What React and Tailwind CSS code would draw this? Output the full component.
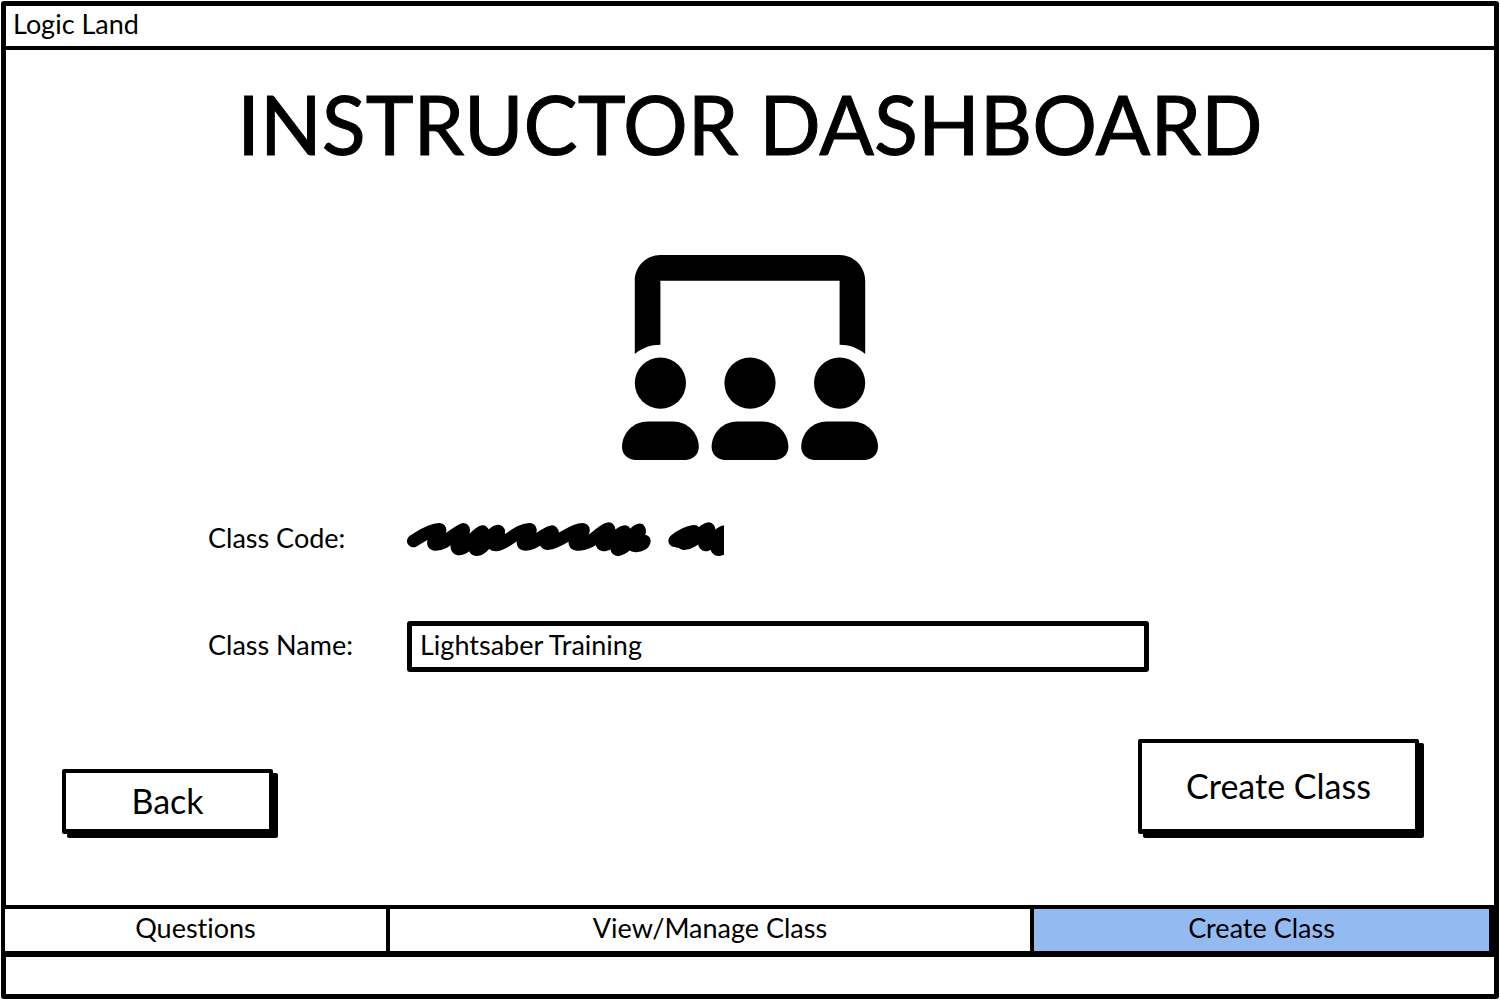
import React from "react";

function ClassroomIcon() {
  return (
    <svg viewBox="0 0 640 512" className="h-[205px] w-64" fill="currentColor" role="img" aria-label="Classroom">
      <path d="M32 64C32 28.7 60.7 0 96 0H544C579.3 0 608 28.7 608 64V247C590 232 568 224 544 224V64H96V224C72 224 50 232 32 247Z" />
      {[0, 224, 448].map((x) => (
        <g key={x}>
          <circle cx={x + 96} cy="320" r="64" />
          <path
            transform={`translate(${x} 416)`}
            d="M0 64C0 28.7 28.7 0 64 0H128C163.3 0 192 28.7 192 64C192 81.7 177.7 96 160 96H32C14.3 96 0 81.7 0 64Z"
          />
        </g>
      ))}
    </svg>
  );
}

function Scribble() {
  return (
    <svg
      viewBox="21 0 951 150"
      className="h-[50px] w-[317px]"
      fill="none"
      stroke="currentColor"
      strokeWidth="38"
      strokeLinecap="round"
      strokeLinejoin="round"
      role="img"
      aria-label="Hidden class code"
    >
      <path d="M40 78C60 66 88 44 118 43C130 46 88 84 104 88C138 90 160 54 190 43C198 50 156 96 176 102C200 104 226 56 248 50C258 58 212 98 228 104C256 104 272 50 295 48C304 56 262 90 288 90C326 84 350 44 388 43C404 46 354 84 374 88C404 92 430 54 456 50C464 58 424 82 442 86C482 82 512 44 548 43C562 46 508 84 530 88C580 90 600 46 626 41C634 50 590 88 612 90C642 84 650 54 674 50C680 60 636 98 654 104C690 98 694 50 718 45C726 60 676 90 708 93C722 93 732 86 733 78" />
      <path d="M660 70L710 76" strokeWidth="56" />
      <path d="M180 80L270 74" strokeWidth="44" />
      <path d="M824 77C840 64 858 52 882 49C868 64 838 82 852 86C888 84 900 48 926 41C936 54 902 88 918 90C942 84 948 54 976 49C980 66 934 98 956 104C978 102 984 80 1000 60" />
      <path d="M832 76L875 66M950 70L990 76" strokeWidth="44" />
    </svg>
  );
}

const actionClass =
  "cursor-pointer rounded-[2px] border-4 border-b-5 border-black bg-white text-[34px] leading-10 shadow-[5px_4px_0_0_#000]";

const tabs = [
  { label: "Questions", className: "border-r-4 bg-white" },
  { label: "View/Manage Class", className: "border-r-4 bg-white" },
  { label: "Create Class", className: "bg-[#94baf2]", current: true },
];

export default function App() {
  return (
    <div className="flex min-h-screen flex-col bg-white p-px font-['Lato','Open_Sans',sans-serif] text-[27px] leading-8 text-black [font-variant-ligatures:none]">
      <div className="flex grow flex-col rounded-[3px] border-5 border-black">
        <header className="flex h-11 items-center border-b-4 border-black px-[7px] pb-1">Logic Land</header>

        <main className="flex grow flex-col">
          <h1 className="mt-6 text-center text-[81px] leading-[100px] [-webkit-text-stroke:1px_#000]">
            INSTRUCTOR DASHBOARD
          </h1>

          <div className="mt-[81px] flex justify-center">
            <ClassroomIcon />
          </div>

          <form id="class-form" className="mr-[345px] ml-[202px] mt-[55px] grid grid-cols-[199px_1fr] items-center gap-y-14">
            <span className="pb-1">Class Code:</span>
            <Scribble />
            <label htmlFor="class-name" className="pb-1">
              Class Name:
            </label>
            <input
              id="class-name"
              type="text"
              defaultValue="Lightsaber Training"
              className="h-[51px] w-full rounded-[3px] border-5 border-black bg-white px-2 pb-1 outline-none"
            />
          </form>

          <div className="mt-auto mb-[71px] flex items-end justify-between pr-[75px] pl-14">
            <button type="button" className={`${actionClass} h-[65px] w-[211px]`}>
              Back
            </button>
            <button type="submit" form="class-form" className={`${actionClass} h-[95px] w-[281px]`}>
              Create Class
            </button>
          </div>
        </main>

        <nav className="-ml-px grid h-[52px] grid-cols-[385fr_644fr_455fr] border-t-4 border-r-5 border-b-6 border-black">
          {tabs.map((tab) => (
            <button
              key={tab.label}
              type="button"
              aria-current={tab.current ? "page" : undefined}
              className={`cursor-pointer border-black pb-1 ${tab.className}`}
            >
              {tab.label}
            </button>
          ))}
        </nav>
        <footer className="h-[37px]" />
      </div>
    </div>
  );
}
